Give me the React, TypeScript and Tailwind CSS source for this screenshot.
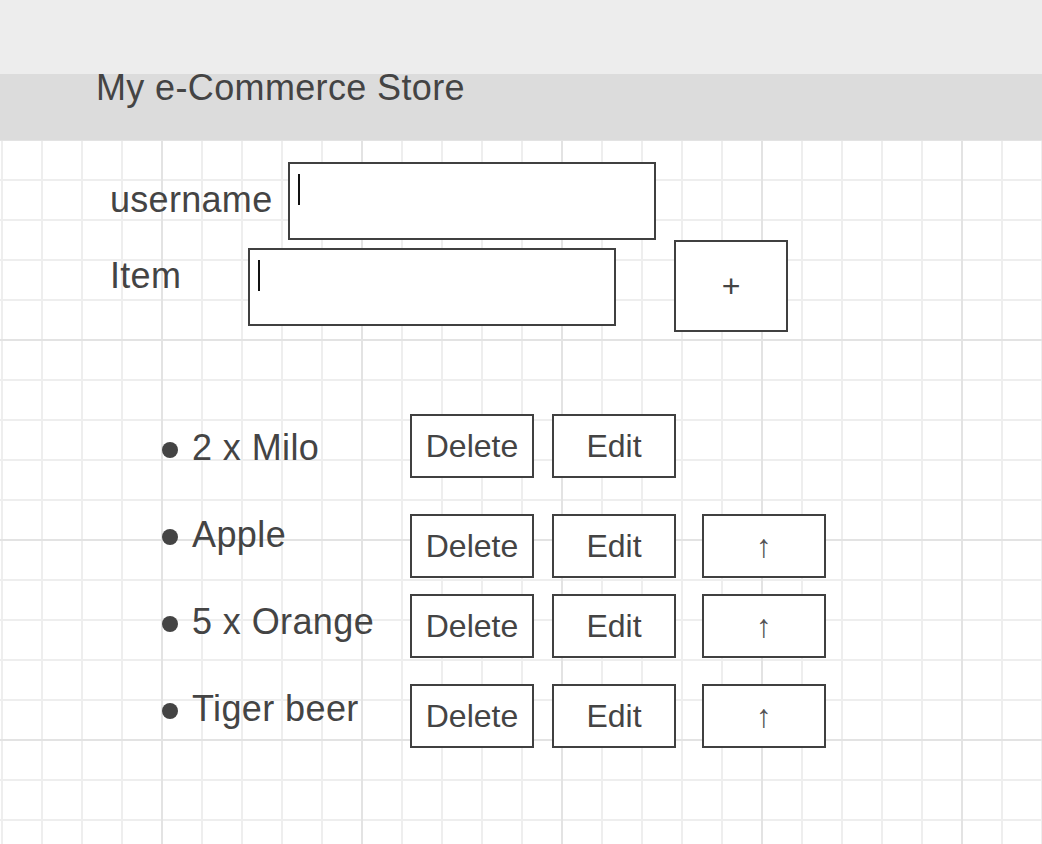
import React from 'react';

const items = [
  { label: '2 x Milo', up: false },
  { label: 'Apple', up: true },
  { label: '5 x Orange', up: true },
  { label: 'Tiger beer', up: true },
];

// tops of the button rows are uneven in the sketch, so each row carries its own gap
const rowGaps = ['mt-[10px]', 'mt-[36px]', 'mt-[16px]', 'mt-[26px]'];

const App: React.FC = () => {
  return (
    <div className="min-h-screen flex flex-col font-['Liberation_Sans',Arial,sans-serif] text-[#444]">
      {/* Header */}
      <div className="h-[74px] bg-[#ededed]"></div>
      <header className="h-[66px] bg-[#dcdcdc] pl-[96px]">
        <h1 className="text-[36px] leading-none -mt-[4px] tracking-[0.36px]">My e-Commerce Store</h1>
      </header>

      {/* Grid canvas */}
      <main className="flex-1 bg-white pl-[110px] [background-image:linear-gradient(to_right,#e3e3e3_2px,transparent_2px),linear-gradient(to_bottom,#e3e3e3_2px,transparent_2px),linear-gradient(to_right,#eeeeee_2px,transparent_2px),linear-gradient(to_bottom,#eeeeee_2px,transparent_2px)] [background-size:200px_200px,200px_200px,40px_40px,40px_40px] [background-position:161px_-1px,161px_-1px,1px_-1px,1px_-1px]">
        {/* Form */}
        <div className="flex items-start pt-[22px]">
          <label className="w-[178px] mt-[20px] text-[36px] leading-none tracking-[0.3px]">username</label>
          <div className="w-[368px] h-[78px] border-2 border-[#404040] bg-white pl-[8px] pt-[10px]">
            <div className="w-[2px] h-[31px] bg-[#111]"></div>
          </div>
        </div>
        <div className="flex items-start">
          <label className="w-[138px] mt-[18px] text-[36px] leading-none tracking-[0.3px]">Item</label>
          <div className="mt-[8px] w-[368px] h-[78px] border-2 border-[#404040] bg-white pl-[8px] pt-[10px]">
            <div className="w-[2px] h-[31px] bg-[#111]"></div>
          </div>
          <button className="ml-[58px] w-[114px] h-[92px] border-2 border-[#404040] bg-white text-[32px] leading-none flex items-center justify-center">
            +
          </button>
        </div>

        {/* List */}
        <div className="flex items-start mt-[72px] pb-[80px]">
          <ul className="ml-[52px] w-[248px]">
            {items.map((it) => (
              <li key={it.label} className="h-[87px] flex items-center gap-[14px]">
                <span className="w-4 h-4 rounded-full bg-[#444] mt-[5px]"></span>
                <span className="text-[36px] leading-none tracking-[0.4px]">{it.label}</span>
              </li>
            ))}
          </ul>
          <div className="flex flex-col">
            {items.map((it, i) => (
              <div key={it.label} className={`flex ${rowGaps[i]}`}>
                <button className="w-[124px] h-[64px] border-2 border-[#404040] bg-white text-[32px] leading-none flex items-center justify-center">
                  Delete
                </button>
                <button className="ml-[18px] w-[124px] h-[64px] border-2 border-[#404040] bg-white text-[32px] leading-none flex items-center justify-center">
                  Edit
                </button>
                {it.up && (
                  <button className="ml-[26px] w-[124px] h-[64px] border-2 border-[#404040] bg-white text-[32px] leading-none text-[#555] flex items-center justify-center">
                    ↑
                  </button>
                )}
              </div>
            ))}
          </div>
        </div>
      </main>
    </div>
  );
};

export default App;
